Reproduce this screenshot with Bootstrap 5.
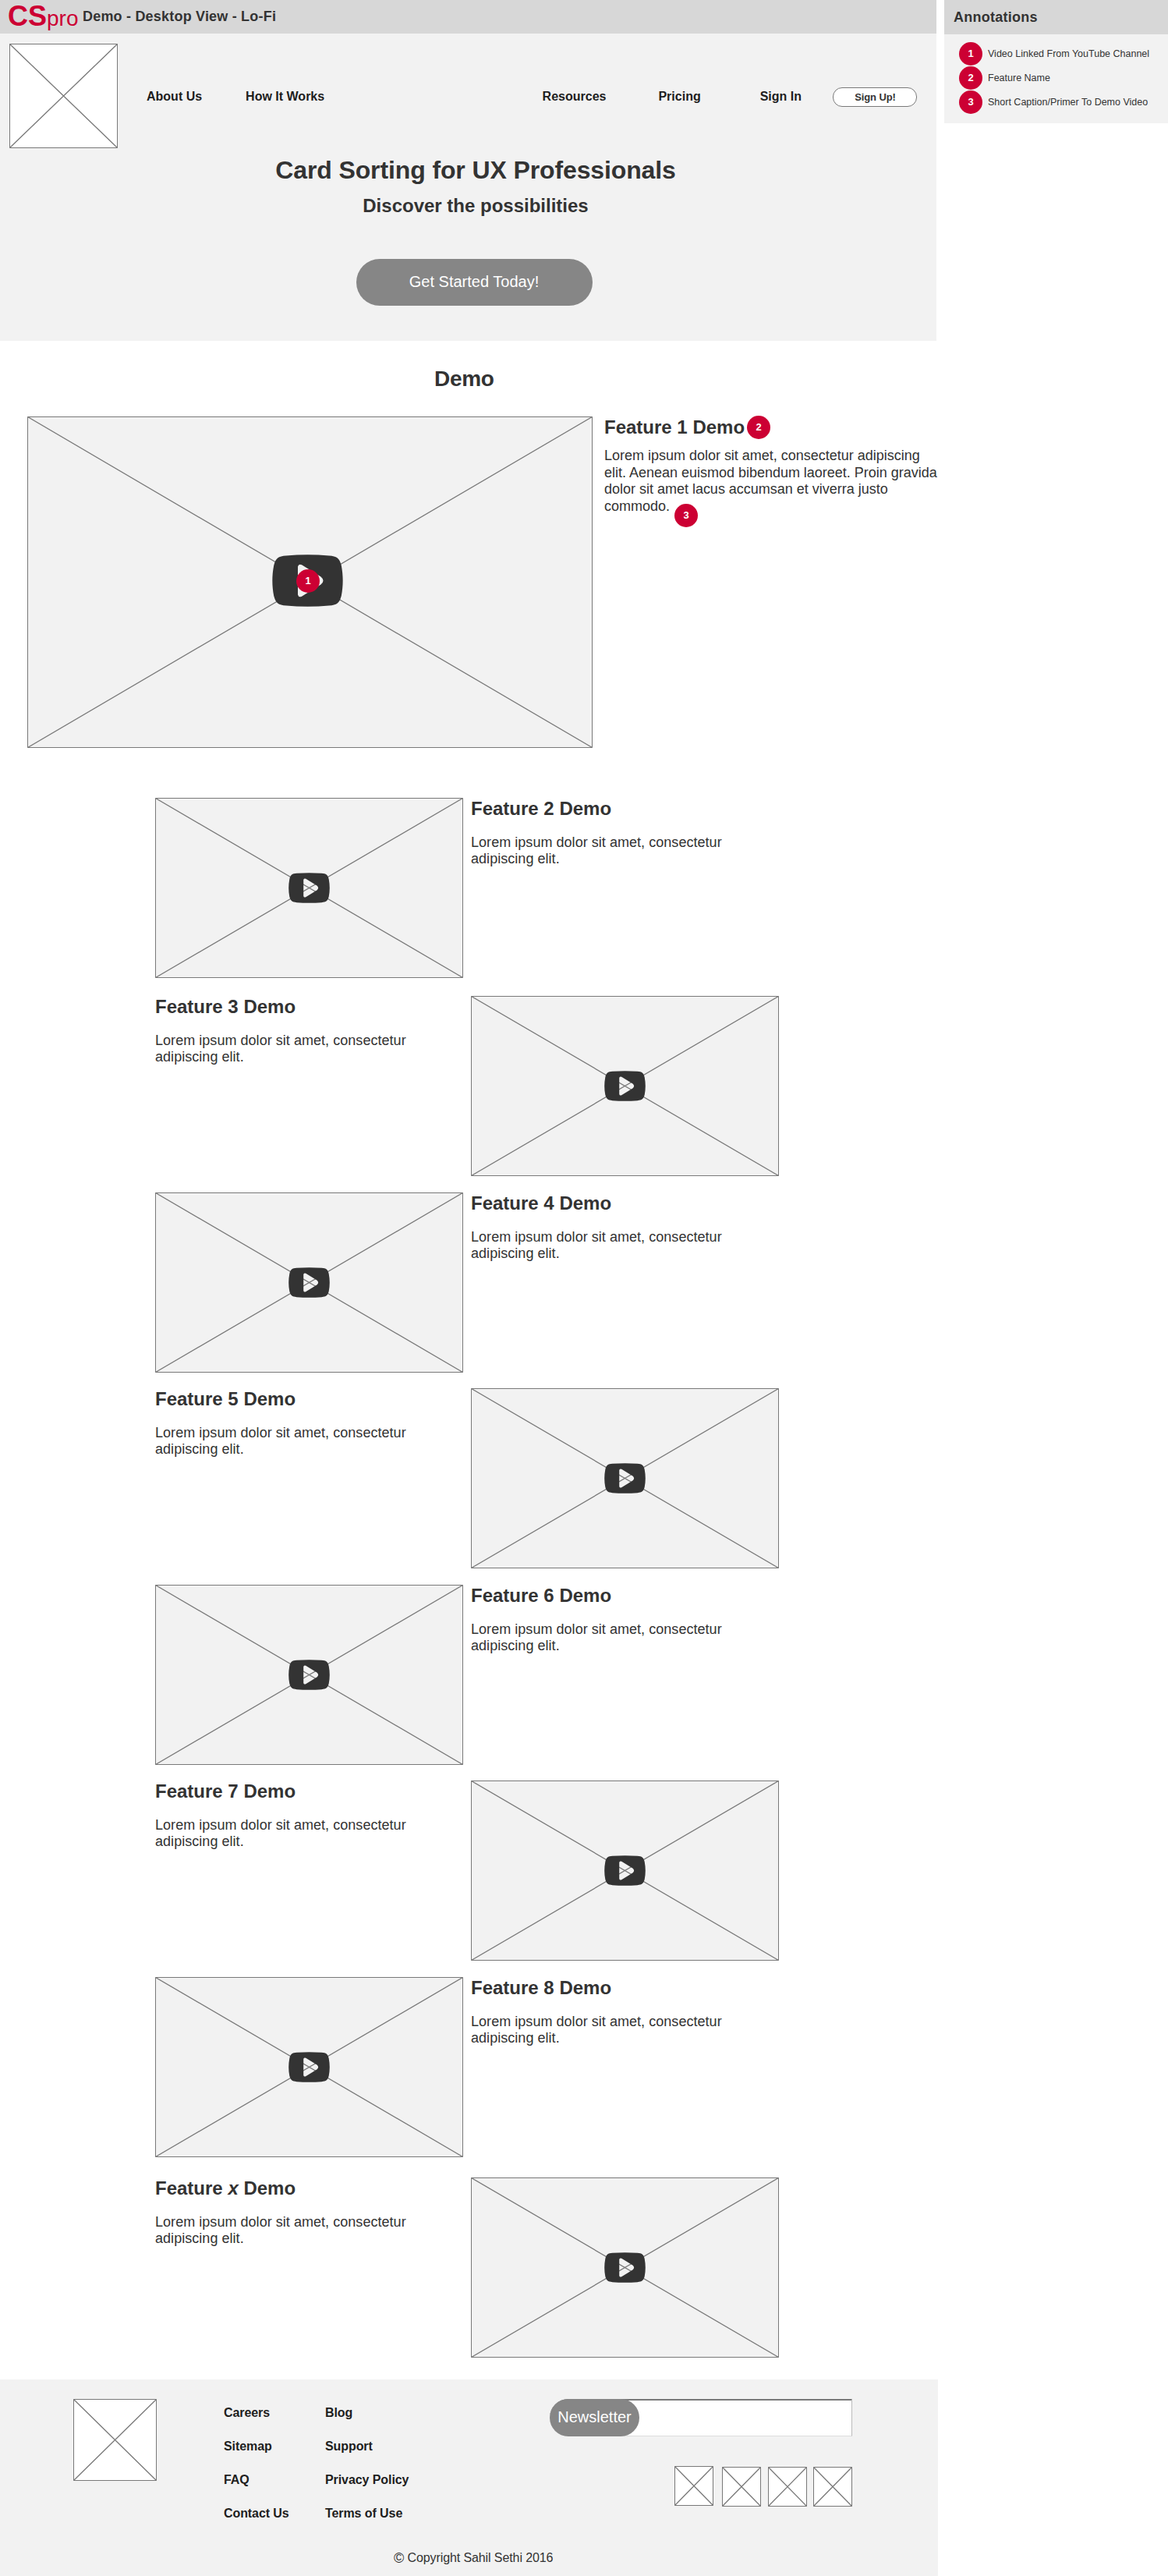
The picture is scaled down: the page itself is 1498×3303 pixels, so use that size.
<!DOCTYPE html>
<html lang="en">
<head>
<meta charset="utf-8">
<title>CSpro Demo - Desktop View - Lo-Fi</title>
<meta name="viewport" content="width=device-width, initial-scale=1">
<link href="https://cdn.jsdelivr.net/npm/bootstrap@5.3.0/dist/css/bootstrap.min.css" rel="stylesheet">
<style>
body{font-family:"Liberation Sans",Arial,sans-serif;color:#333;background:#fff;line-height:1.2}
h1,h2,h3,p,ul{margin:0}
h1,h2,h3{font-weight:700;white-space:nowrap}
.page-wrap{width:1498px;height:3303px}
.main-side{width:1203px}
.bar-top{width:1201px;height:43px;background:#d7d7d7;padding-left:9px}
.brand-line{color:#c03;line-height:40px;width:97px;white-space:nowrap;padding-left:1px;margin-top:1px}
.brand-a{font-size:36px;font-weight:700}
.brand-b{font-size:28px}
.bar-title{font-size:18px;font-weight:700;line-height:22px;letter-spacing:.2px;margin-top:10px}
.hero{width:1201px;height:394px;background:#f2f2f2}
.hero-title{font-size:32px;line-height:38px;margin-top:9px;letter-spacing:-.12px}
.hero-sub{font-size:24px;line-height:28px;margin-top:13px}
.hero-copy{padding-left:19px}
.nav-line{height:147px;padding:13px 25px 0 12px}
.navy,.navy:hover{font-size:16px;font-weight:700;color:#1e1e1e;text-decoration:none;line-height:20px;white-space:nowrap}
.nav-left{margin:58px 0 0 37px;gap:56px}
.nav-right{margin:58px 40px 0 auto}
.ph{display:block;flex:none;stroke:#797979;stroke-width:1;fill:#fff}
.ph.gray{fill:#f2f2f2}
.diag{stroke-width:1.3}
.signup{width:108px;height:25px;margin-top:56px;padding:0 0 0 1px;border:1px solid #797979;border-radius:12px;background:#fff;font-size:13px;font-weight:700;color:#333;line-height:23px;letter-spacing:-.1px}
.cta{width:303px;height:60px;border-radius:30px;background:#868686;color:#fff;font-size:20px;border:0;padding:0 0 3px;margin:54px 4px 0 0}
.annot{width:287px;margin-left:8px}
.annot-head{height:44px;background:#d7d7d7;font-size:18px;font-weight:700;line-height:22px;padding:11px 0 0 12px;letter-spacing:.25px}
.annot-body{height:114px;background:#f2f2f2;padding:10px 0 0 19px;gap:1px;font-size:12.5px;white-space:nowrap}
.dot{display:flex;align-items:center;justify-content:center;width:30px;height:30px;border-radius:50%;background:#c03;color:#fff;font-size:13px;font-weight:700;flex:none}
.demo-title{font-size:28px;line-height:32px;padding:33px 0 0 557px;letter-spacing:-.3px}
.feature-one{padding-left:35px;margin-top:32px}
.video{position:relative;flex:none}
.video .dot{position:absolute;left:345px;top:196px}
.txt{font-size:18px;line-height:21px;letter-spacing:.04px}
.f1{padding-left:15px;position:relative}
.f1 .txt{width:428px;line-height:21.65px;margin-top:11px;letter-spacing:-.01px}
.f1 .dot2{margin:-1px 0 0 3px}
.f1 .dot3{position:absolute;left:105px;top:112px}
.frow{width:800px;height:231px;gap:10px;margin-left:199px}
.fcopy{width:395px}
.fcopy h3,.f1 h3{font-size:24px;line-height:28px}
.fcopy .txt{width:350px;margin-top:19px}
.foot{width:1203px;height:252px;background:#f2f2f2;padding:25px 110px 0 94px}
.foot-main{height:194px}
.flinks{gap:23px;padding-top:8px;letter-spacing:-.08px}
.news{width:388px;height:48px;background:#fff;border:1px solid #ddd;border-top:2px solid #797979;border-right-color:#bbb;border-left:0;border-radius:24px 0 0 24px}
.newsbtn{width:115px;height:48px;margin-top:-2px;border-radius:24px;border:0;background:#868686;color:#fff;font-size:20px;padding:0 0 3px}
.copy{font-size:16px;line-height:20px;padding-left:411px;letter-spacing:-.1px;white-space:nowrap}
.copy span{font-size:18px;line-height:1;vertical-align:-1px}
</style>
<script src="https://cdn.jsdelivr.net/npm/bootstrap@5.3.0/dist/js/bootstrap.bundle.min.js"></script>
</head>
<body>
<svg width="0" height="0" class="position-absolute">
  <symbol id="play" viewBox="0 0 91 67"><path fill="#333" stroke="none" fill-rule="evenodd" d="M18 1.500C36-.2 55-.2 73 1.500C83 2 86.500 5 88.800 14C91.300 27 91.300 40 88.800 53C86.500 62 83 65 73 65.500C55 67.200 36 67.200 18 65.500C8 65 4.500 62 2.200 53C-.3 40-.3 27 2.200 14C4.500 5 8 2 18 1.500ZM33 15.500V51.500Q34 55.500 38 53.700L62.500 38.500Q68.500 33.500 62.500 28.500L38 13.300Q34 11.500 33 15.500Z"/></symbol>
  <symbol id="thumb" viewBox="0 0 395 231"><path d="M.5.5h394v230H.5z"/><path class="diag" d="M.5.5L394.500 230.500M394.500.5L.5 230.500"/><use href="#play" x="171" y="96" width="53" height="39"/></symbol>
  <symbol id="tiny" viewBox="0 0 50 51"><path d="M.5.5h49v50H.5z"/><path class="diag" d="M.5.5L49.500 50.500M49.500.5L.5 50.500"/></symbol>
</svg>
<div class="page-wrap d-flex align-items-start">
<div class="main-side">
  <div class="bar-top d-flex align-items-start">
    <div class="brand-line"><span class="brand-a">CS</span><span class="brand-b">pro</span></div>
    <span class="bar-title">Demo - Desktop View - Lo-Fi</span>
  </div>
  <header class="hero">
    <nav class="nav-line d-flex align-items-start">
      <svg class="ph" width="139" height="134"><path d="M.5.5h138v133H.5z"/><path class="diag" d="M.5.5L138.500 133.500M138.500.5L.5 133.500"/></svg>
      <div class="nav-left d-flex">
        <a class="navy" href="#">About Us</a>
        <a class="navy" href="#">How It Works</a>
      </div>
      <div class="nav-right d-flex">
        <a class="navy" href="#">Resources</a>
        <a class="navy" href="#" style="margin-left:67px">Pricing</a>
        <a class="navy" href="#" style="margin-left:76px">Sign In</a>
      </div>
      <button class="signup">Sign Up!</button>
    </nav>
    <div class="hero-copy d-flex flex-column align-items-center">
      <h1 class="hero-title">Card Sorting for UX Professionals</h1>
      <h2 class="hero-sub">Discover the possibilities</h2>
      <button class="cta">Get Started Today!</button>
    </div>
  </header>
  <main>
    <h2 class="demo-title">Demo</h2>
    <section class="feature-one d-flex">
      <div class="video">
        <svg class="ph gray" width="725" height="425"><path d="M.5.5h724v424H.5z"/><path class="diag" d="M.5.5L724.500 424.500M724.500.5L.5 424.500"/><path stroke="none" d="M345 190h40v40h-40z"/><use href="#play" x="314" y="177" width="91" height="67"/></svg>
        <span class="dot">1</span>
      </div>
      <div class="f1">
        <div class="d-flex align-items-start"><h3>Feature 1 Demo</h3><span class="dot dot2">2</span></div>
        <p class="txt">Lorem ipsum dolor sit amet, consectetur adipiscing elit. Aenean euismod bibendum laoreet. Proin gravida dolor sit amet lacus accumsan et viverra justo commodo.</p>
        <span class="dot dot3">3</span>
      </div>
    </section>
    <section class="frow d-flex" style="margin-top:64px">
      <svg class="ph gray" width="395" height="231"><use href="#thumb"/></svg>
      <div class="fcopy"><h3>Feature 2 Demo</h3><p class="txt">Lorem ipsum dolor sit amet, consectetur adipiscing elit.</p></div>
    </section>
    <section class="frow d-flex flex-row-reverse justify-content-end" style="margin-top:23px">
      <svg class="ph gray" width="395" height="231"><use href="#thumb"/></svg>
      <div class="fcopy"><h3>Feature 3 Demo</h3><p class="txt">Lorem ipsum dolor sit amet, consectetur adipiscing elit.</p></div>
    </section>
    <section class="frow d-flex" style="margin-top:21px">
      <svg class="ph gray" width="395" height="231"><use href="#thumb"/></svg>
      <div class="fcopy"><h3>Feature 4 Demo</h3><p class="txt">Lorem ipsum dolor sit amet, consectetur adipiscing elit.</p></div>
    </section>
    <section class="frow d-flex flex-row-reverse justify-content-end" style="margin-top:20px">
      <svg class="ph gray" width="395" height="231"><use href="#thumb"/></svg>
      <div class="fcopy"><h3>Feature 5 Demo</h3><p class="txt">Lorem ipsum dolor sit amet, consectetur adipiscing elit.</p></div>
    </section>
    <section class="frow d-flex" style="margin-top:21px">
      <svg class="ph gray" width="395" height="231"><use href="#thumb"/></svg>
      <div class="fcopy"><h3>Feature 6 Demo</h3><p class="txt">Lorem ipsum dolor sit amet, consectetur adipiscing elit.</p></div>
    </section>
    <section class="frow d-flex flex-row-reverse justify-content-end" style="margin-top:20px">
      <svg class="ph gray" width="395" height="231"><use href="#thumb"/></svg>
      <div class="fcopy"><h3>Feature 7 Demo</h3><p class="txt">Lorem ipsum dolor sit amet, consectetur adipiscing elit.</p></div>
    </section>
    <section class="frow d-flex" style="margin-top:21px">
      <svg class="ph gray" width="395" height="231"><use href="#thumb"/></svg>
      <div class="fcopy"><h3>Feature 8 Demo</h3><p class="txt">Lorem ipsum dolor sit amet, consectetur adipiscing elit.</p></div>
    </section>
    <section class="frow d-flex flex-row-reverse justify-content-end" style="margin-top:26px;margin-bottom:28px">
      <svg class="ph gray" width="395" height="231"><use href="#thumb"/></svg>
      <div class="fcopy"><h3>Feature <em>x</em> Demo</h3><p class="txt">Lorem ipsum dolor sit amet, consectetur adipiscing elit.</p></div>
    </section>
  </main>
  <footer class="foot">
    <div class="foot-main d-flex align-items-start">
      <svg class="ph" width="107" height="105"><path d="M.5.5h106v104H.5z"/><path class="diag" d="M.5.5L106.500 104.500M106.500.5L.5 104.500"/></svg>
      <div class="flinks d-flex flex-column" style="margin-left:86px;width:130px">
        <a class="navy" href="#">Careers</a><a class="navy" href="#">Sitemap</a><a class="navy" href="#">FAQ</a><a class="navy" href="#">Contact Us</a>
      </div>
      <div class="flinks d-flex flex-column">
        <a class="navy" href="#">Blog</a><a class="navy" href="#">Support</a><a class="navy" href="#">Privacy Policy</a><a class="navy" href="#">Terms of Use</a>
      </div>
      <div class="ms-auto d-flex flex-column align-items-end">
        <div class="news"><button class="newsbtn d-block">Newsletter</button></div>
        <div class="d-flex" style="margin-top:38px">
          <svg class="ph" width="50" height="51" style="margin-right:11px"><use href="#tiny"/></svg>
          <svg class="ph" width="50" height="51" style="margin:1px 9px 0 0"><use href="#tiny"/></svg>
          <svg class="ph" width="50" height="51" style="margin:1px 8px 0 0"><use href="#tiny"/></svg>
          <svg class="ph" width="50" height="51" style="margin-top:1px"><use href="#tiny"/></svg>
        </div>
      </div>
    </div>
    <p class="copy"><span>©</span> Copyright Sahil Sethi 2016</p>
  </footer>
</div>
<aside class="annot">
  <div class="annot-head">Annotations</div>
  <div class="annot-body d-flex flex-column">
    <div class="d-flex align-items-center" style="gap:7px"><span class="dot">1</span>Video Linked From YouTube Channel</div>
    <div class="d-flex align-items-center" style="gap:7px"><span class="dot">2</span>Feature Name</div>
    <div class="d-flex align-items-center" style="gap:7px"><span class="dot">3</span>Short Caption/Primer To Demo Video</div>
  </div>
</aside>
</div>
</body>
</html>
